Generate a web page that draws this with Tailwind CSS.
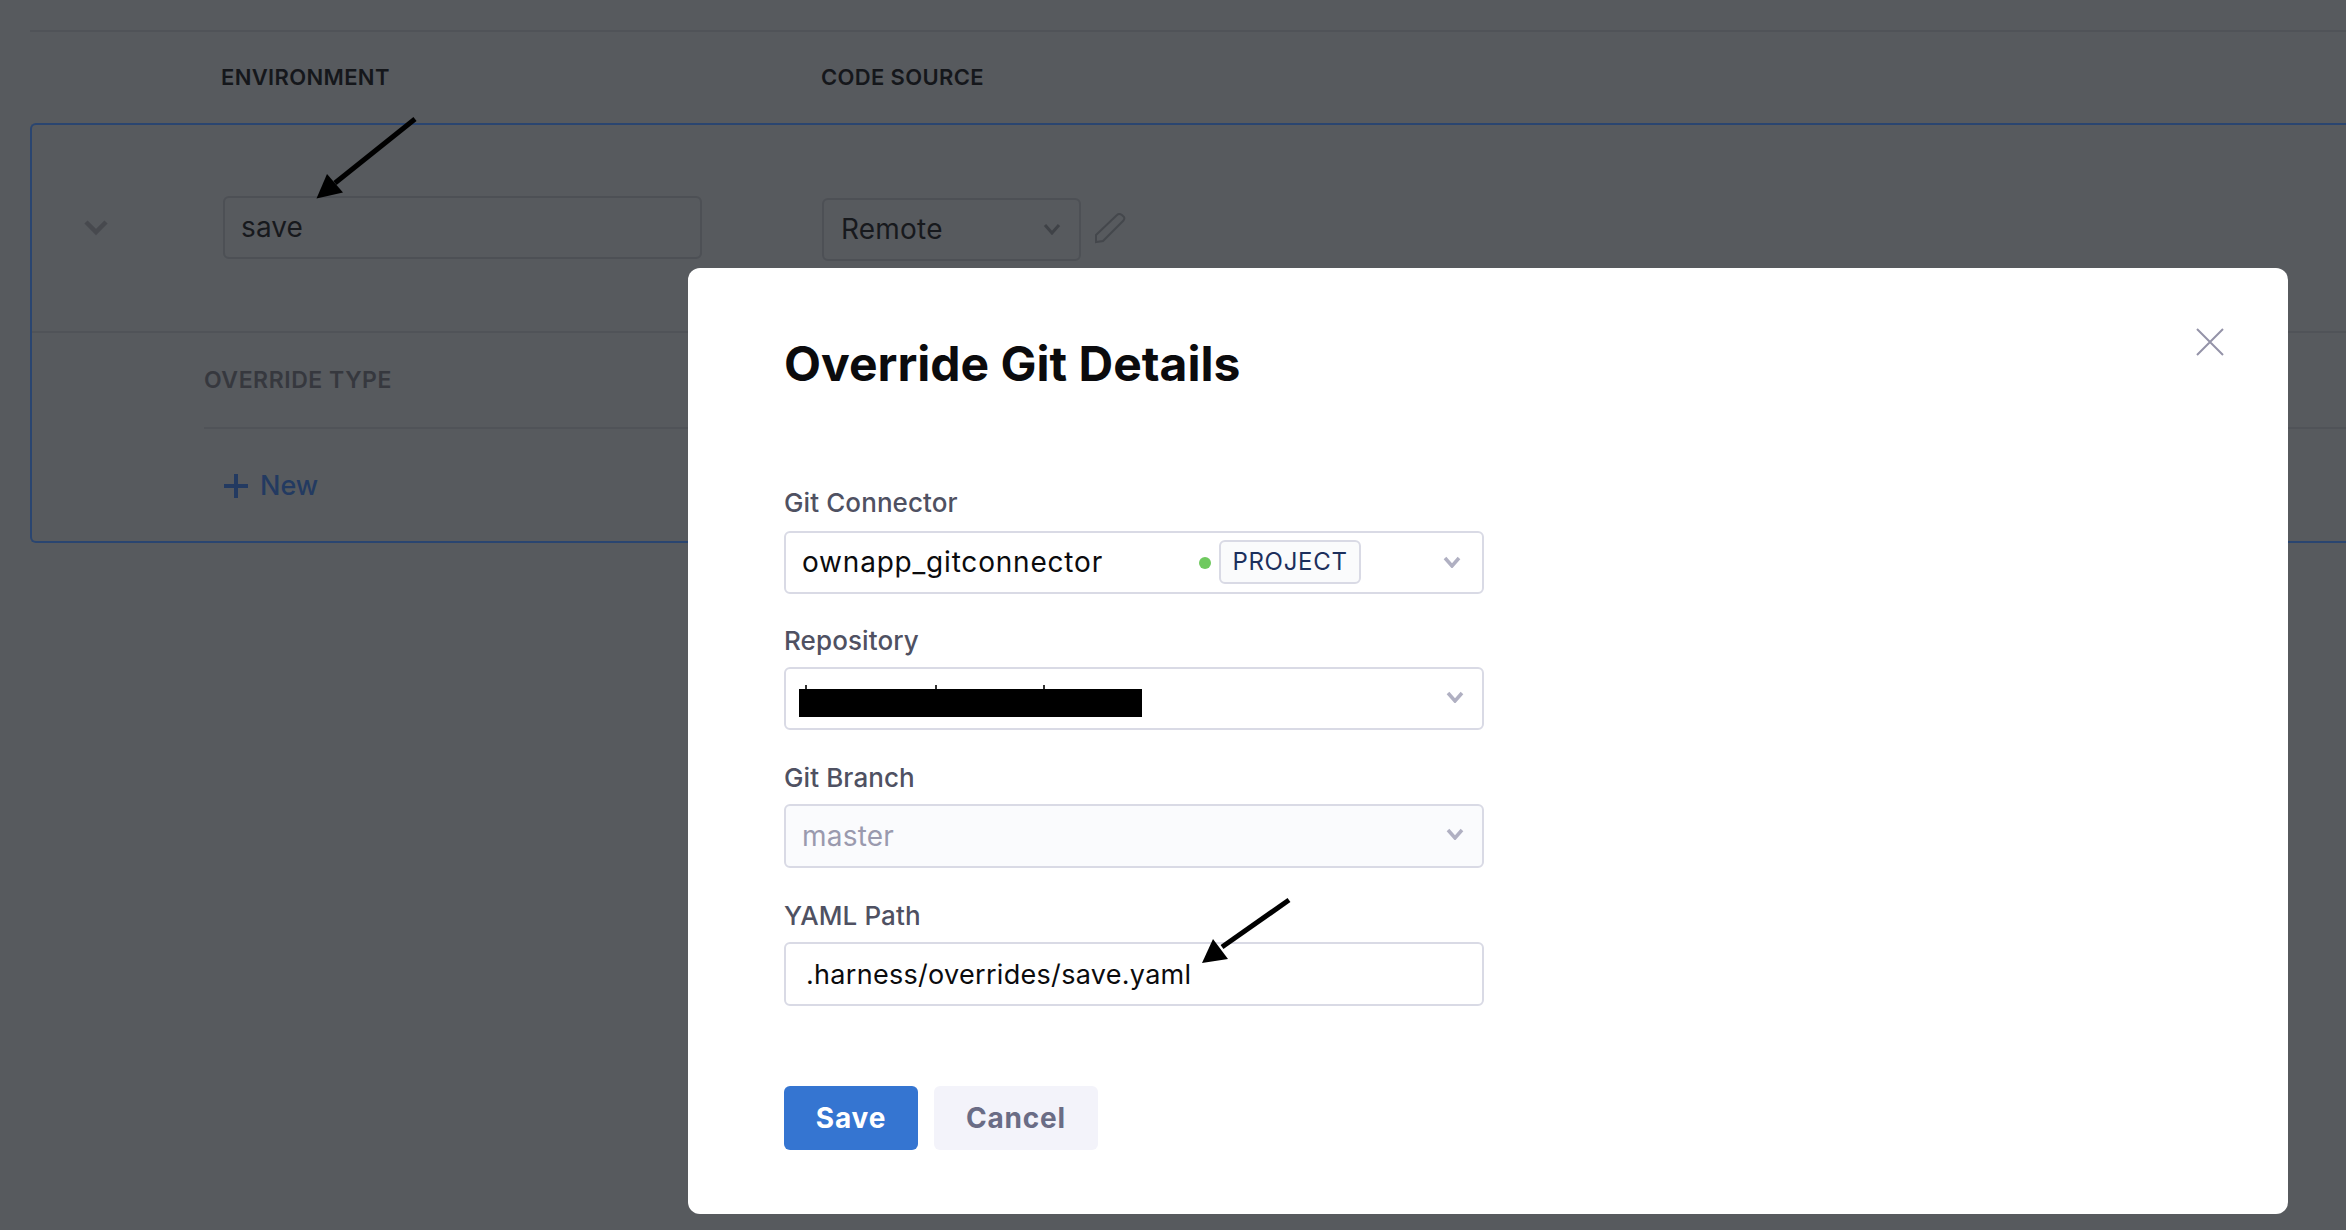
<!DOCTYPE html>
<html lang="en">
<head>
  <meta charset="UTF-8">
  <meta name="viewport" content="width=device-width, initial-scale=1.0">
  <title>Override Git Details</title>
  <script src="https://cdn.jsdelivr.net/npm/@tailwindcss/browser@4"></script>
</head>
<body class="bg-[#575a5e] font-['Inter',sans-serif] w-[2346px] h-[1230px] overflow-hidden relative">
  <!-- Page behind the dialog -->
  <div class="pt-[30px] pl-[30px]">
    <div class="border-t-2 border-[#505358]"></div>
    <div class="flex items-center h-[91px] pl-[191px] text-[22px] tracking-[0.35px] font-semibold text-[#15171b] uppercase">
      <div class="w-[600px]">Environment</div>
      <div>Code Source</div>
    </div>
    <div class="border-2 border-r-0 border-[#2a4570] rounded-l-[6px] h-[420px]">
      <div class="flex items-center h-[208px] border-b-2 border-[#505358]">
        <div class="w-[191px] flex pl-[51px]">
          <svg class="w-[26px] h-[18px]" viewBox="0 0 26 18" fill="none" stroke="#47494e" stroke-width="4.5"><path d="M3 3l10 10L23 3"/></svg>
        </div>
        <div class="w-[479px] h-[63px] -mt-[2px] border-2 border-[#4d5055] rounded-[6px] flex items-center pl-[16px] text-[28px] tracking-[0.1px] text-[#17191d]">save</div>
        <div class="w-[120px]"></div>
        <div class="w-[259px] h-[63px] border-2 border-[#4d5055] rounded-[6px] flex items-center justify-between pl-[17px] pr-[18px] text-[28px] tracking-[0.2px] text-[#17191d] mt-[2px]">
          Remote
          <svg class="w-[18px] h-[12px]" viewBox="0 0 18 12" fill="none" stroke="#3f4247" stroke-width="3"><path d="M2 2l7 8 7-8"/></svg>
        </div>
        <svg class="ml-[13px] w-[32px] h-[32px]" viewBox="0 0 32 32" fill="none" stroke="#44474c" stroke-width="2"><path d="M2 23L23 3Q25 1 28 3L30 5Q31 7 29 9L9 29L2 30Z"/></svg>
      </div>
      <div class="pl-[172px]">
        <div class="h-[96px] flex items-center border-b-2 border-[#505358] text-[23px] tracking-[0.55px] font-semibold text-[#36383e] uppercase">Override Type</div>
        <div class="h-[112px] flex items-center pl-[20px] pt-[2px] gap-[12px] text-[27px] font-medium text-[#233a61]">
          <svg class="w-[24px] h-[24px]" viewBox="0 0 24 24" fill="none" stroke="#233a61" stroke-width="4"><path d="M12 0v24M0 12h24"/></svg>
          New
        </div>
      </div>
    </div>
  </div>

  <!-- Dialog -->
  <div class="absolute left-[688px] top-[268px] w-[1600px] h-[946px] bg-white rounded-[12px] pl-[96px] pt-[65px]">
    <svg class="absolute left-[1508px] top-[60px] w-[28px] h-[28px]" viewBox="0 0 28 28" fill="none" stroke="#9493a8" stroke-width="2"><path d="M1 1l26 26M27 1L1 27"/></svg>
    <h1 class="text-[48px] leading-[62px] font-bold text-[#0b0b0d]">Override Git Details</h1>
    <div class="w-[700px] mt-[90px] text-[26px] tracking-[0.1px] text-[#4f5162] font-medium">
      <div class="leading-[36px]">Git Connector</div>
      <div class="mt-[10px] h-[63px] border-2 border-[#d9dae5] rounded-[6px] flex items-center pl-[16px] pb-[2px] text-[28px] tracking-[0.8px] font-normal text-[#0b0b0d]">
        <span class="w-[397px]">ownapp_gitconnector</span>
        <span class="w-[12px] h-[12px] rounded-full bg-[#6fc95f] mt-[2px]"></span>
        <span class="ml-[8px] w-[142px] h-[44px] border-2 border-[#d9dae5] rounded-[6px] bg-[#fafbfc] flex items-center justify-center text-[24px] tracking-[0.7px] text-[#1c2f5c]">PROJECT</span>
        <svg class="ml-[82px] w-[18px] h-[12px]" viewBox="0 0 18 12" fill="none" stroke="#b0b0c2" stroke-width="3.5"><path d="M2 2l7 8 7-8"/></svg>
      </div>
      <div class="mt-[29px] leading-[36px]">Repository</div>
      <div class="mt-[8px] h-[63px] border-2 border-[#d9dae5] rounded-[6px] flex items-center justify-between pl-[13px] pr-[18px]">
        <div class="relative w-[343px] h-[28px] bg-black mt-[9px]">
          <span class="absolute left-[6px] -top-[4px] w-[2px] h-[4px] bg-[#333]"></span>
          <span class="absolute left-[136px] -top-[4px] w-[2px] h-[4px] bg-[#333]"></span>
          <span class="absolute left-[244px] -top-[4px] w-[2px] h-[4px] bg-[#333]"></span>
        </div>
        <svg class="w-[18px] h-[12px] -mt-[4px]" viewBox="0 0 18 12" fill="none" stroke="#b0b0c2" stroke-width="3.5"><path d="M2 2l7 8 7-8"/></svg>
      </div>
      <div class="mt-[30px] leading-[36px]">Git Branch</div>
      <div class="mt-[8px] h-[64px] border-2 border-[#d9dae5] rounded-[6px] bg-[#fafbfd] flex items-center justify-between pl-[16px] pr-[18px] text-[28px] tracking-[0.2px] font-normal text-[#9a9aae]">
        master
        <svg class="w-[18px] h-[12px] -mt-[4px]" viewBox="0 0 18 12" fill="none" stroke="#b0b0c2" stroke-width="3.5"><path d="M2 2l7 8 7-8"/></svg>
      </div>
      <div class="mt-[30px] leading-[36px]">YAML Path</div>
      <div class="mt-[8px] h-[64px] border-2 border-[#d9dae5] rounded-[6px] flex items-center pl-[20px] pt-[2px] text-[27px] tracking-[0.3px] font-normal text-[#0b0b0d]">.harness/overrides/save.yaml</div>
      <div class="flex gap-[16px] mt-[80px]">
        <button class="w-[134px] h-[64px] rounded-[6px] bg-[#3575d1] text-white text-[28px] tracking-[0.8px] font-bold">Save</button>
        <button class="w-[164px] h-[64px] rounded-[6px] bg-[#f3f3fa] text-[#6a6c85] text-[28px] tracking-[0.8px] font-bold">Cancel</button>
      </div>
    </div>
  </div>

  <!-- Annotation arrows drawn over the screenshot -->
  <svg class="absolute left-0 top-0 w-[2346px] h-[1230px] pointer-events-none" viewBox="0 0 2346 1230">
    <path d="M415 119L335 183" stroke="#000" stroke-width="5"/>
    <path d="M316.5 198.5L327 174L343 192.5Z" fill="#000"/>
    <path d="M1289 900L1222 947" stroke="#000" stroke-width="5"/>
    <path d="M1202 963L1213 939L1228 959Z" fill="#000"/>
  </svg>
</body>
</html>
